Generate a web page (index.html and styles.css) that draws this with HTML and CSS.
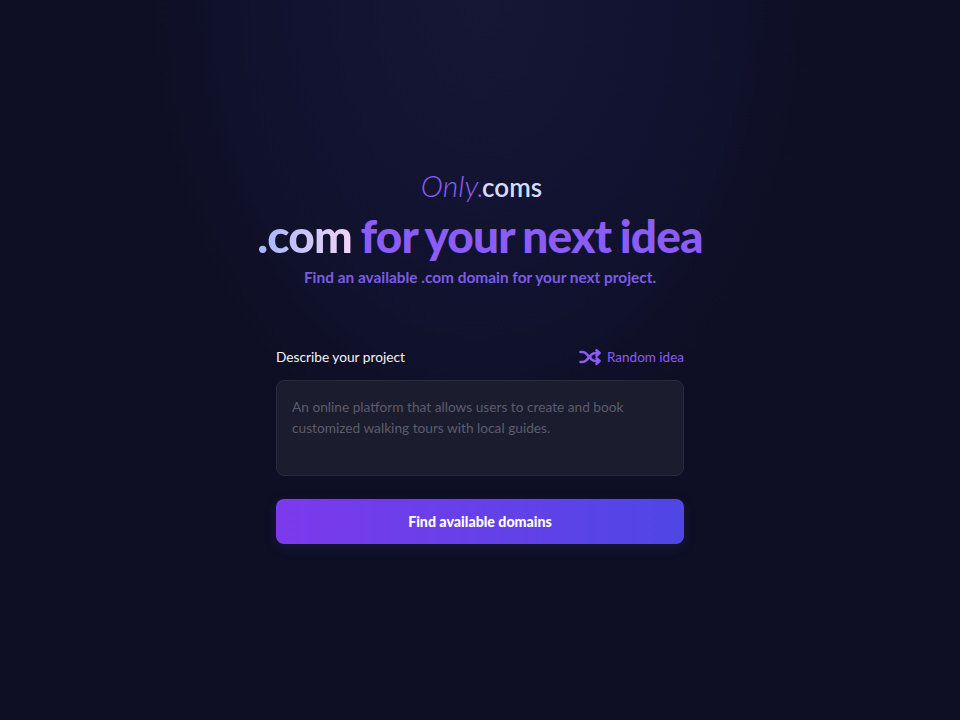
FILE: index.html
```html
<!DOCTYPE html>
<html lang="en">
<head>
  <meta charset="UTF-8">
  <title>Only.coms</title>
  <link rel="stylesheet" href="styles.css">
</head>
<body>

<main class="page">
  <header class="hero">
    <div class="logo"><em>Only.</em><span>coms</span></div>
    <h1><span class="accent">.com</span> for your next idea</h1>
    <p class="subtitle">Find an available .com domain for your next project.</p>
  </header>

  <form class="search-form">
    <div class="form-top">
      <label for="idea">Describe your project</label>
      <button type="button" class="random-btn">
        <svg width="22" height="16" viewBox="0 0 22 16" fill="none" stroke="currentColor" stroke-width="2.6" stroke-linecap="round" stroke-linejoin="round">
          <path d="M1.500 3h1.500c2 0 3 .5 4.200 1.700l5.600 6c1.200 1.200 2.200 1.300 4.200 1.300h3"/>
          <path d="M1.500 13h1.500c2 0 3-.5 4.200-1.700l5.600-6C14 4.100 15 4 17 4h3"/>
          <path d="M17.500 1.300L20.500 4l-3 2.700"/>
          <path d="M17.500 9.300l3 2.700-3 2.700"/>
        </svg>
        Random idea
      </button>
    </div>
    <textarea id="idea" rows="3" placeholder="An online platform that allows users to create and book customized walking tours with local guides."></textarea>
    <button type="button" class="btn-primary">Find available domains</button>
  </form>
</main>

</body>
</html>
```

FILE: styles.css
```css
* {
  box-sizing: border-box;
}

body {
  margin: 0;
  height: 720px;
  overflow: hidden;
  font-family: "Lato", "Noto Sans", sans-serif;
  color: #f3f4f6;
  background: radial-gradient(ellipse 340px 480px at 50% 0, #161734 0%, #121331 50%, #0e0f24 100%) #0e0f24;
}

.page {
  display: flex;
  flex-direction: column;
  align-items: center;
  padding-top: 168px;
}

.hero {
  text-align: center;
  margin-bottom: 59px;
}

.logo {
  padding-left: 3px;
  font-size: 30px;
  line-height: 35px;
  color: #d5dcfb;
}

.logo em {
  margin-right: -2px;
  font-weight: 300;
  color: #8b5cf6;
}

.logo span {
  font-size: 26px;
  font-weight: 600;
}

h1 {
  margin: 5px 0 0;
  font-size: 46px;
  line-height: 52px;
  font-weight: 900;
  letter-spacing: -0.85px;
  word-spacing: -1.5px;
  white-space: nowrap;
  color: #8b5cf6;
}

.accent {
  background: linear-gradient(90deg, #a5b4fc, #f0d5f5);
  -webkit-background-clip: text;
  background-clip: text;
  color: transparent;
}

.subtitle {
  margin: 3px 0 0;
  font-size: 15.4px;
  line-height: 24px;
  font-weight: 700;
  color: #7c5ce6;
}

.search-form {
  width: 408px;
  display: flex;
  flex-direction: column;
}

.form-top {
  display: flex;
  justify-content: space-between;
  align-items: center;
  margin-bottom: 15px;
}

label {
  font-size: 13.7px;
  color: #f3f4f6;
}

.random-btn {
  display: flex;
  align-items: center;
  gap: 6px;
  padding: 0;
  border: none;
  background: none;
  font-family: inherit;
  font-size: 13.5px;
  color: #8b5cf6;
  cursor: pointer;
}

textarea {
  width: 100%;
  height: 96px;
  padding: 15px 15px;
  border: 1px solid #2a2b3e;
  border-radius: 8px;
  background-color: #1b1c2e;
  font-family: inherit;
  font-size: 13.7px;
  line-height: 21px;
  color: #f3f4f6;
  resize: none;
  outline: none;
}

textarea::placeholder {
  color: #5b5c6b;
}

.btn-primary {
  height: 45px;
  margin-top: 23px;
  border: none;
  border-radius: 8px;
  background: linear-gradient(90deg, #7c3aed, #4f46e5);
  box-shadow: 0 4px 14px rgba(79, 70, 229, 0.12);
  font-family: inherit;
  font-size: 14.2px;
  font-weight: 900;
  color: #fff;
  cursor: pointer;
}
```
